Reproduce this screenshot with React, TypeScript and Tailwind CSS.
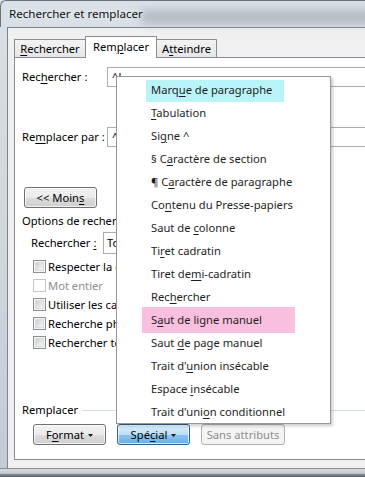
import React from "react";

const U = ({ c }: { c: string }) => (
  <span className="underline decoration-1 underline-offset-[2px]">{c}</span>
);

const Acc = ({ t, i }: { t: string; i: number }) => (
  <>
    {t.slice(0, i)}
    <U c={t[i]} />
    {t.slice(i + 1)}
  </>
);

const Arrow = () => (
  <svg width="5" height="3" viewBox="0 0 5 3" className="ml-[4px] mt-[1px]">
    <path d="M0 0H5L2.5 3Z" fill="#1b1b1b" />
  </svg>
);

const Check = ({ disabled }: { disabled?: boolean }) => (
  <div
    className={
      "w-[13px] h-[13px] shrink-0 border flex items-center justify-center " +
      (disabled ? "border-[#c6c6c6] bg-white" : "border-[#8e8f8f] bg-[#f4f4f4]")
    }
  >
    {!disabled && (
      <div className="w-[9px] h-[9px] bg-[linear-gradient(135deg,#cbcfd5,#f7f7f7)] border border-[#dcdcdc]" />
    )}
  </div>
);

const menuItems: { t: string; i: number; hl?: "cyan" | "pink" }[] = [
  { t: "Marque de paragraphe", i: 4, hl: "cyan" },
  { t: "Tabulation", i: 0 },
  { t: "Signe ^", i: 2 },
  { t: "§ Caractère de section", i: 3 },
  { t: "¶ Caractère de paragraphe", i: 3 },
  { t: "Contenu du Presse-papiers", i: 2 },
  { t: "Saut de colonne", i: 8 },
  { t: "Tiret cadratin", i: 2 },
  { t: "Tiret demi-cadratin", i: 8 },
  { t: "Rechercher", i: 3 },
  { t: "Saut de ligne manuel", i: 1, hl: "pink" },
  { t: "Saut de page manuel", i: 5 },
  { t: "Trait d'union insécable", i: 8 },
  { t: "Espace insécable", i: 7 },
  { t: "Trait d'union conditionnel", i: 11 },
];

const btn =
  "h-[21px] rounded-[3px] border flex items-center justify-center shadow-[inset_0_0_0_1px_rgba(255,255,255,0.7)]";

export default function App() {
  return (
    <div className="w-[365px] h-[477px] relative overflow-hidden flex flex-col bg-[linear-gradient(180deg,#d9e0e7,#c3ccd5)] text-[11.2px] leading-none text-black font-['Noto_Sans',sans-serif]">
      {/* title bar */}
      <div className="relative h-[27px] flex items-center pl-[8px] shrink-0 rounded-tl-[6px] border-l border-t border-[#6a737c]">
        <div className="absolute left-[140px] top-[9px] w-[240px] h-[14px] bg-[#a4acb4] blur-[5px] opacity-70" />
        <span className="relative text-[11.6px] text-[#111] [text-shadow:0_0_6px_#ffffff]">
          Rechercher et remplacer
        </span>
      </div>

      {/* client */}
      <div className="h-[441px] shrink-0 ml-[7px] border-l border-t border-[#7b8590] bg-[#f0f0f0] flex flex-col">
        {/* tabs */}
        <div className="relative z-10 h-[22px] mt-[8px] -mb-[1px] ml-[6px] flex items-end">
          <div className="w-[72px] h-[18px] mb-[1px] border border-b-0 border-[#898c95] bg-[linear-gradient(#f3f3f3,#e6e6e6)] flex items-center justify-center">
            <Acc t="Rechercher" i={0} />
          </div>
          <div className="relative z-10 -ml-[1px] w-[72px] h-[22px] border border-b-0 border-[#898c95] bg-white flex items-center justify-center pb-[2px]">
            <Acc t="Remplacer" i={3} />
          </div>
          <div className="-ml-[1px] w-[61px] h-[18px] mb-[1px] border border-b-0 border-[#898c95] bg-[linear-gradient(#f3f3f3,#e6e6e6)] flex items-center justify-center">
            <Acc t="Atteindre" i={1} />
          </div>
        </div>

        {/* panel */}
        <div className="ml-[6px] w-[420px] h-[403px] border border-[#898c95] bg-white flex flex-col shrink-0">
          <div className="mt-[9px] h-[20px] flex items-center">
            <div className="pl-[7px] w-[92px] shrink-0">
              <Acc t="Rechercher :" i={3} />
            </div>
            <div className="w-[300px] h-[20px] border border-[#abadb3] pl-[4px] flex items-center">^l</div>
          </div>
          <div className="mt-[40px] h-[20px] flex items-center">
            <div className="pl-[7px] w-[92px] shrink-0">
              <Acc t="Remplacer par :" i={2} />
            </div>
            <div className="w-[300px] h-[20px] border border-[#abadb3] pl-[4px] flex items-center">^</div>
          </div>
          <div className="mt-[40px] pl-[9px] flex">
            <div className={btn + " w-[73px] border-[#707070] bg-[linear-gradient(#f2f2f2,#ebebeb_50%,#dddddd_50%,#cfcfcf)]"}>
              {"<< Moin"}
              <U c="s" />
            </div>
          </div>
          {/* options area, partly covered by the popup menu */}
          <div className="w-[101px] overflow-hidden flex flex-col">
            <div className="mt-[5px] pl-[7px] h-[16px] flex items-center whitespace-nowrap">Options de recherche</div>
            <div className="mt-[3px] h-[22px] flex items-center pl-[16px] whitespace-nowrap">
              <div className="w-[72px] shrink-0">
                Rechercher <U c=":" />
              </div>
              <div className="w-[200px] shrink-0 h-[22px] border border-[#abadb3] pl-[3px] flex items-center">Tous</div>
            </div>
            <div className="mt-[3px] flex flex-col pl-[18px]">
              {[
                ["Respecter la casse", false],
                ["Mot entier", true],
                ["Utiliser les caractères génériques", false],
                ["Recherche phonétique (anglais)", false],
                ["Rechercher toutes les formes du mot (anglais)", false],
              ].map(([t, d]) => (
                <div key={t as string} className="h-[19px] flex items-center gap-[2px] whitespace-nowrap">
                  <Check disabled={d as boolean} />
                  <span className={d ? "text-[#8d8d8d]" : ""}>{t as string}</span>
                </div>
              ))}
            </div>
          </div>
          <div className="mt-[50px] h-[16px] pl-[7px] flex items-center">
            <span>Remplacer</span>
            <div className="ml-[4px] flex-1 h-px bg-[#d5dfe5]" />
          </div>
          <div className="mt-[6px] pl-[18px] flex gap-[11px]">
            <div className={btn + " w-[73px] border-[#707070] bg-[linear-gradient(#f2f2f2,#ebebeb_50%,#dddddd_50%,#cfcfcf)]"}>
              <Acc t="Format" i={1} />
              <Arrow />
            </div>
            <div className={btn + " w-[73px] border-[#2c628b] bg-[linear-gradient(#d8ecfa,#bfdff6_50%,#8ec5ee_50%,#64aee6)]"}>
              <Acc t="Spécial" i={3} />
              <Arrow />
            </div>
            <div className="h-[21px] w-[84px] rounded-[3px] border border-[#adb2b5] bg-[#f4f4f4] flex items-center justify-center text-[#8d8d8d]">
              Sans attributs
            </div>
          </div>
        </div>
      </div>

      {/* bottom frame */}
      <div className="h-[9px] shrink-0 border-t border-[#8a8f94] bg-[linear-gradient(#d3d8dd,#c6ccd2_55%,#8e959c_60%,#5a6066)]" />

      {/* popup menu */}
      <div className="absolute left-[116px] top-[76px] w-[215px] h-[348px] border border-[#979797] bg-white pt-[1px] shadow-[2px_2px_3px_rgba(0,0,0,0.2)] text-[#1e1e1e]">
        {menuItems.map((m) => (
          <div key={m.t} className="relative h-[23px] flex items-center pl-[34px]">
            {m.hl === "cyan" && (
              <div className="absolute left-[29px] top-[2px] w-[138px] h-[22px] bg-[#b9f5f8]" />
            )}
            {m.hl === "pink" && (
              <div className="absolute left-[25px] top-[-1px] w-[153px] h-[26px] bg-[#f8c0de]" />
            )}
            <span className="relative">
              <Acc t={m.t} i={m.i} />
            </span>
          </div>
        ))}
      </div>
    </div>
  );
}
